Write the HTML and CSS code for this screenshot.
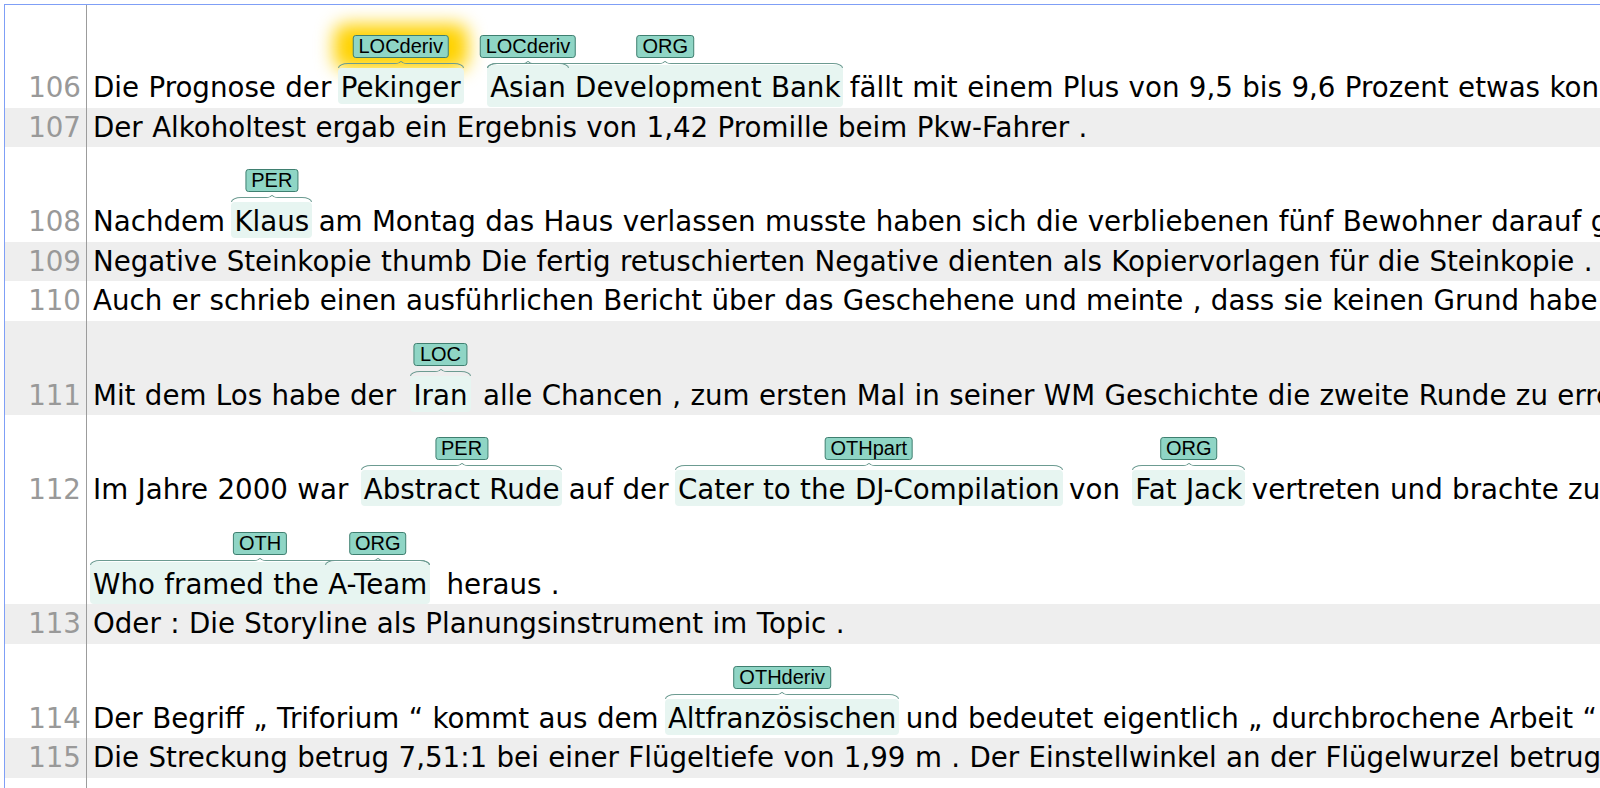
FILE: index.html
```html
<!DOCTYPE html>
<html lang="de">
<head>
<meta charset="utf-8">
<title>brat</title>
<link rel="stylesheet" href="styles.css">
</head>
<body>
<div class="doc">
  <div class="row first">
    <div class="num"><span class="n ann">106</span></div>
    <div class="text">
      <div class="line ann">Die Prognose der <span class="sp glow"><span class="br"><i></i><i></i><i></i><i></i></span><span class="lab">LOCderiv</span>Pekinger</span> <span class="sp out g-asian"><span class="br"><i></i><i></i><i></i><i></i></span><span class="lab">ORG</span><span class="sp"><span class="br"><i></i><i></i><i></i><i></i></span><span class="lab">LOCderiv</span>Asian</span> Development Bank</span> fällt mit einem Plus von 9,5 bis 9,6 Prozent etwas konservativer aus als die der Weltbank .</div>
    </div>
  </div>
  <div class="row alt">
    <div class="num"><span class="n">107</span></div>
    <div class="text"><div class="line">Der Alkoholtest ergab ein Ergebnis von 1,42 Promille beim Pkw-Fahrer .</div></div>
  </div>
  <div class="row">
    <div class="num"><span class="n ann">108</span></div>
    <div class="text">
      <div class="line ann">Nachdem <span class="sp"><span class="br"><i></i><i></i><i></i><i></i></span><span class="lab">PER</span>Klaus</span> am Montag das Haus verlassen musste haben sich die verbliebenen fünf Bewohner darauf geeinigt , das Haus zu verkaufen .</div>
    </div>
  </div>
  <div class="row alt">
    <div class="num"><span class="n">109</span></div>
    <div class="text"><div class="line">Negative Steinkopie thumb Die fertig retuschierten Negative dienten als Kopiervorlagen für die Steinkopie .</div></div>
  </div>
  <div class="row">
    <div class="num"><span class="n">110</span></div>
    <div class="text"><div class="line">Auch er schrieb einen ausführlichen Bericht über das Geschehene und meinte , dass sie keinen Grund habe , sich zu sorgen .</div></div>
  </div>
  <div class="row alt">
    <div class="num"><span class="n ann">111</span></div>
    <div class="text">
      <div class="line ann">Mit dem Los habe der <span class="sp g-iran"><span class="br"><i></i><i></i><i></i><i></i></span><span class="lab">LOC</span>Iran</span> alle Chancen , zum ersten Mal in seiner WM Geschichte die zweite Runde zu erreichen .</div>
    </div>
  </div>
  <div class="row">
    <div class="num"><span class="n ann">112</span></div>
    <div class="text">
      <div class="line ann">Im Jahre 2000 war <span class="sp g5"><span class="br"><i></i><i></i><i></i><i></i></span><span class="lab">PER</span>Abstract Rude</span> auf der <span class="sp"><span class="br"><i></i><i></i><i></i><i></i></span><span class="lab">OTHpart</span>Cater to the DJ-Compilation</span> von <span class="sp g5"><span class="br"><i></i><i></i><i></i><i></i></span><span class="lab">ORG</span>Fat Jack</span> vertreten und brachte zudem den Song</div>
      <div class="line ann"><span class="sp out"><span class="br"><i></i><i></i><i></i><i></i></span><span class="lab">OTH</span>Who framed the <span class="sp"><span class="br"><i></i><i></i><i></i><i></i></span><span class="lab">ORG</span>A-Team</span></span> <span class="g-heraus">heraus .</span></div>
    </div>
  </div>
  <div class="row alt">
    <div class="num"><span class="n">113</span></div>
    <div class="text"><div class="line">Oder : Die Storyline als Planungsinstrument im Topic .</div></div>
  </div>
  <div class="row">
    <div class="num"><span class="n ann">114</span></div>
    <div class="text">
      <div class="line ann">Der Begriff „ Triforium “ kommt aus dem <span class="sp g-alt"><span class="br"><i></i><i></i><i></i><i></i></span><span class="lab">OTHderiv</span>Altfranzösischen</span> und bedeutet eigentlich „ durchbrochene Arbeit “ .</div>
    </div>
  </div>
  <div class="row alt">
    <div class="num"><span class="n">115</span></div>
    <div class="text"><div class="line">Die Streckung betrug 7,51:1 bei einer Flügeltiefe von 1,99 m . Der Einstellwinkel an der Flügelwurzel betrug 3 Grad .</div></div>
  </div>
  <div class="row fill">
    <div class="num"></div>
    <div class="text"></div>
  </div>
</div>
</body>
</html>
```
FILE: styles.css
```css
* { box-sizing: border-box; }
html, body {
  margin: 0;
  padding: 0;
  background: #ffffff;
}
body {
  height: 788px;
  overflow: hidden;
}
.doc {
  margin: 4px 0 0 4px;
  height: 784px;
  border-top: 1px solid #7f9ff6;
  border-left: 1px solid #7f9ff6;
  display: flex;
  flex-direction: column;
  overflow: hidden;
  font-family: "DejaVu Sans", Verdana, sans-serif;
  font-size: 27.7px;
  word-spacing: 0.6px;
  color: #000;
}
.row {
  display: flex;
  flex: none;
  position: relative;
  isolation: isolate;
}
.row.alt { background: #eeeeee; }
.row.fill { flex: 1; }
.row.first .num,
.row.first .text { padding-top: 8px; }
.num {
  width: 82px;
  flex: none;
  border-right: 1px solid #9c9c9c;
  text-align: right;
  padding-right: 5px;
  color: #999999;
}
.num .n {
  display: block;
  height: 39.5px;
  line-height: 39.5px;
}
.num .n.ann { margin-top: 55px; }
.text {
  flex: 1;
  min-width: 0;
  padding-left: 6px;
}
.line {
  height: 39.5px;
  line-height: 39.5px;
  white-space: nowrap;
}
.line.ann {
  height: 94.5px;
  padding-top: 55px;
}

/* annotated spans */
.sp {
  position: relative;
  background: #e7f5f1;
  border-radius: 4px;
  padding: 3px 3px 0 3px;
  margin: 0 -3px;
}
.sp.out { padding: 6px 3px 3px 3px; }

.br {
  position: absolute;
  left: 0;
  right: 0;
  bottom: 100%;
  height: 7px;
  display: flex;
}
.sp.out > .br { bottom: calc(100% - 3px); }
.br i {
  display: block;
  border: 0 solid #6c9b91;
}
.br i:nth-child(1) {
  flex: 1;
  align-self: flex-end;
  height: 5px;
  border-top-width: 1px;
  border-left-width: 1px;
  border-top-left-radius: 10px 5px;
}
.br i:nth-child(2) {
  width: 6px;
  height: 3px;
  border-bottom-width: 1px;
  border-right-width: 1px;
  border-bottom-right-radius: 6px 3px;
}
.br i:nth-child(3) {
  width: 6px;
  height: 3px;
  border-bottom-width: 1px;
  border-left-width: 1px;
  border-bottom-left-radius: 6px 3px;
}
.br i:nth-child(4) {
  flex: 1;
  align-self: flex-end;
  height: 5px;
  border-top-width: 1px;
  border-right-width: 1px;
  border-top-right-radius: 10px 5px;
}

.lab {
  position: absolute;
  left: 50%;
  bottom: calc(100% + 10px);
  transform: translateX(-50%);
  font-family: "Liberation Sans", Arial, sans-serif;
  font-size: 20px;
  line-height: 21px;
  word-spacing: 0;
  padding: 0 5px;
  background: #8fd5c5;
  border: 1px solid #3f7f70;
  border-radius: 3px;
  white-space: nowrap;
  color: #000;
}
.sp.out > .lab { bottom: calc(100% + 7px); }

.sp.glow::before {
  content: "";
  position: absolute;
  left: -4px;
  right: -4px;
  bottom: calc(100% - 2px);
  height: 46px;
  background: #ffd200;
  border-radius: 12px;
  filter: blur(9px);
  z-index: -1;
}

/* extra chunk spacing produced by label widths */
.g-asian { margin-left: 17px; }
.sp.g5 { margin-left: 3px; }
.sp.g-iran { margin-left: 5px; margin-right: 3px; }
.sp.g-alt { margin-left: -3px; }
.g-heraus { margin-left: 10px; }
```
